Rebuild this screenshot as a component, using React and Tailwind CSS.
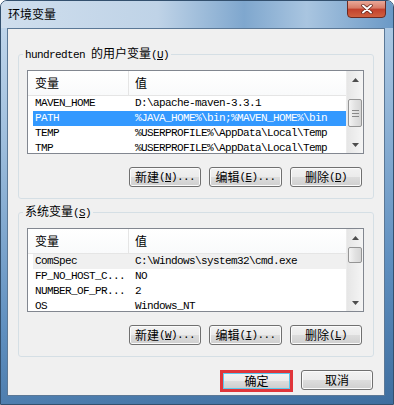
import React from "react";

const MONO = "font-['Liberation_Mono','Noto_Sans_CJK_SC',monospace] text-[11px] tracking-[-0.6px]";

const USER_VARS = [
  { name: "MAVEN_HOME", value: "D:\\apache-maven-3.3.1" },
  { name: "PATH", value: "%JAVA_HOME%\\bin;%MAVEN_HOME%\\bin", sel: "active" },
  { name: "TEMP", value: "%USERPROFILE%\\AppData\\Local\\Temp" },
  { name: "TMP", value: "%USERPROFILE%\\AppData\\Local\\Temp" },
];

const SYSTEM_VARS = [
  { name: "ComSpec", value: "C:\\Windows\\system32\\cmd.exe", sel: "inactive" },
  { name: "FP_NO_HOST_C...", value: "NO" },
  { name: "NUMBER_OF_PR...", value: "2" },
  { name: "OS", value: "Windows_NT" },
];

function Key({ k, tail = "" }) {
  return (
    <span className={MONO}>
      (<u className="underline-offset-[1px]">{k}</u>){tail}
    </span>
  );
}

function Arrow({ down }) {
  return (
    <div className="h-[17px] flex items-center justify-center">
      <svg width="7" height="4" viewBox="0 0 7 4">
        <polygon points={down ? "0,0 7,0 3.5,4" : "0,4 3.5,0 7,4"} fill="#4d4d4d" />
      </svg>
    </div>
  );
}

function Scrollbar({ big }) {
  return (
    <div className="w-[17px] shrink-0 flex flex-col bg-[linear-gradient(90deg,#e6e6e6,#f5f5f5)] border-l border-[#ececec]">
      <Arrow />
      <div className="flex-1 flex flex-col">
        {big ? (
          <div className="mt-[11px] h-[28px] mx-[1px] rounded-[2px] border border-[#959595] bg-[linear-gradient(90deg,#f4f4f4,#e2e2e2_50%,#d6d6d6)] flex flex-col items-center justify-center gap-[2px]">
            <div className="w-[7px] h-px bg-[#8a8a8a]" />
            <div className="w-[7px] h-px bg-[#8a8a8a]" />
            <div className="w-[7px] h-px bg-[#8a8a8a]" />
          </div>
        ) : (
          <div className="mt-[1px] h-[16px] mx-[1px] rounded-[2px] border border-[#959595] bg-[linear-gradient(90deg,#f4f4f4,#e2e2e2_50%,#d6d6d6)]" />
        )}
      </div>
      <Arrow down />
    </div>
  );
}

function VarList({ rows, big }) {
  return (
    <div className="h-[84px] border border-[#828790] bg-white flex overflow-hidden">
      <div className="flex-1 flex flex-col overflow-hidden">
        <div className="h-[25px] shrink-0 flex border-b border-[#e5e5e5] bg-[linear-gradient(#ffffff,#f9fafb)]">
          <div className="w-[101px] pl-[7px] border-r border-[#e5e5e5] flex items-center">变量</div>
          <div className="pl-[6px] flex items-center">值</div>
        </div>
        {rows.map((r) => (
          <div
            key={r.name}
            className={
              "h-[15px] shrink-0 ml-[5px] flex items-center whitespace-nowrap leading-[15px] " +
              MONO +
              (r.sel === "active"
                ? " bg-[#3399ff] text-white"
                : r.sel === "inactive"
                ? " bg-[#f0f0f0]"
                : "")
            }
          >
            <div className="w-[100px] shrink-0 pl-[2px] overflow-hidden">{r.name}</div>
            <div className="pl-[2px]">{r.value}</div>
          </div>
        ))}
      </div>
      <Scrollbar big={big} />
    </div>
  );
}

function Btn({ children, className = "" }) {
  return (
    <button
      className={
        "w-[72px] h-[20px] border border-[#707070] rounded-[3px] bg-[linear-gradient(#f2f2f2_0%,#ebebeb_50%,#dddddd_50%,#cfcfcf_100%)] shadow-[inset_0_0_0_1px_#fbfbfb] flex items-center justify-center leading-[16px] whitespace-nowrap " +
        className
      }
    >
      {children}
    </button>
  );
}

function Group({ label, rows, big, keys }) {
  return (
    <fieldset className="w-[356px] border border-[#d5dfe5] rounded-[3px]">
      <legend className="ml-[4px] px-[2px] leading-[16px] whitespace-nowrap">{label}</legend>
      <div className="pl-[8px] pr-[9px] pt-[7px] pb-[11px]">
        <VarList rows={rows} big={big} />
        <div className="mt-[13px] pr-[2px] flex justify-end gap-[8px]">
          <Btn>
            新建<Key k={keys[0]} tail="..." />
          </Btn>
          <Btn className="w-[73px]">
            编辑<Key k={keys[1]} tail="..." />
          </Btn>
          <Btn>
            删除<Key k={keys[2]} />
          </Btn>
        </div>
      </div>
    </fieldset>
  );
}

export default function App() {
  return (
    <div className="w-[394px] h-[405px] flex flex-col border border-[#33506e] rounded-t-[7px] overflow-hidden bg-[linear-gradient(170deg,#c7dbee_0%,#9ebedd_30%,#5f8fbf_70%,#3e6e9f_100%)] font-['Noto_Sans_CJK_SC',sans-serif] text-[12px] text-black">
      {/* Title bar */}
      <div className="h-[27px] shrink-0 flex items-start justify-between pl-[7px] pr-[7px] bg-[linear-gradient(90deg,#cfdeed_0%,#bfd3e7_40%,#7fa7ce_62%,#a9c5e0_78%,#6b99c6_100%)]">
        <span className="pt-[5px] leading-[16px]">环境变量</span>
        <button className="-mt-px w-[39px] h-[18px] rounded-b-[4px] border border-[#6b2a22] bg-[linear-gradient(#e9a898_0%,#d77b66_45%,#c2402c_50%,#d0603f_100%)] flex items-center justify-center">
          <svg width="12" height="10" viewBox="0 0 12 10">
            <path d="M2 1.5 L10 8.5 M10 1.5 L2 8.5" stroke="#5a1d14" strokeWidth="3.4" strokeLinecap="round" />
            <path d="M2 1.5 L10 8.5 M10 1.5 L2 8.5" stroke="#ffffff" strokeWidth="2" strokeLinecap="round" />
          </svg>
        </button>
      </div>

      {/* Client area */}
      <div className="ml-[6px] w-[378px] h-[368px] bg-[#f0f0f0] border border-[#5b7896] pl-[10px] pt-[16px]">
        <Group
          label={
            <>
              <span className={MONO}>hundredten </span>的用户变量<Key k="U" />
            </>
          }
          rows={USER_VARS}
          big
          keys={["N", "E", "D"]}
        />
        <div className="mt-[4px]">
          <Group
            label={
              <>
                系统变量<Key k="S" />
              </>
            }
            rows={SYSTEM_VARS}
            keys={["W", "I", "L"]}
          />
        </div>

        <div className="mt-[13px] pr-[11px] flex justify-end items-start gap-[8px]">
          <div className="w-[73px] h-[22px] border-[3px] border-[#e0353a]">
            <div className="w-full h-full border border-[#5cc8ee] bg-[linear-gradient(#f2f2f2_0%,#ebebeb_50%,#dddddd_50%,#cfcfcf_100%)] flex items-center justify-center leading-[16px]">
              确定
            </div>
          </div>
          <Btn className="w-[71px]">取消</Btn>
        </div>
      </div>
    </div>
  );
}
